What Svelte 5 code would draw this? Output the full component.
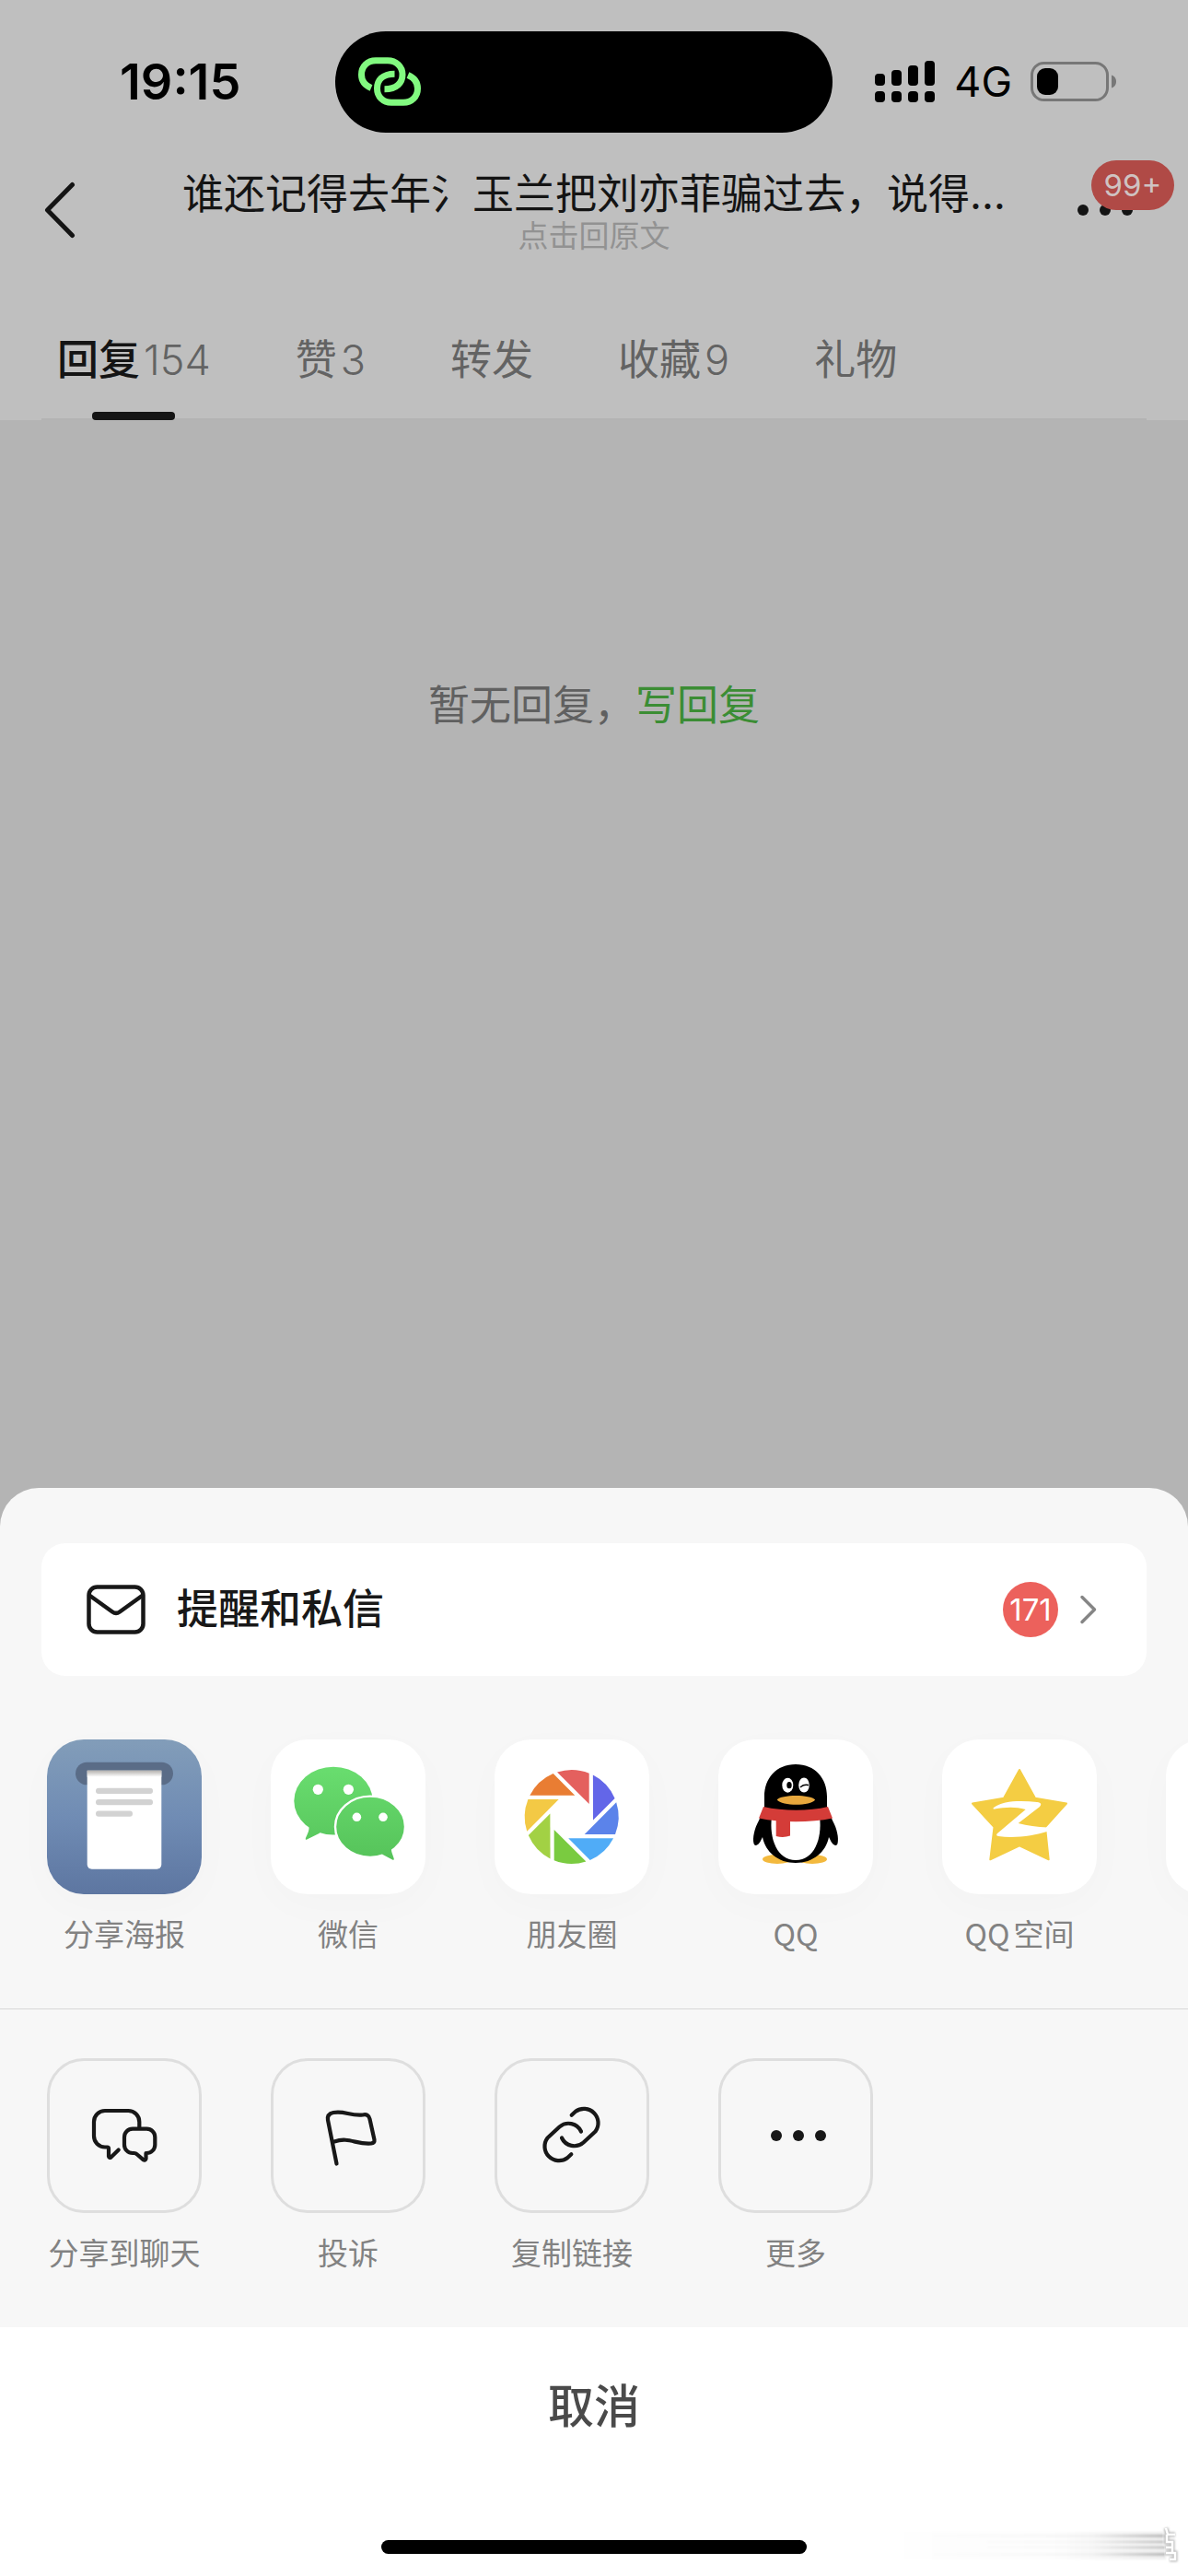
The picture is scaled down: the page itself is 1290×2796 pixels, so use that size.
<script lang="ts">
  type Tab = { name: string; count?: number };
  type Item = { id: string; label: string };

  const tabs: Tab[] = [
    { name: "回复", count: 154 },
    { name: "赞", count: 3 },
    { name: "转发" },
    { name: "收藏", count: 9 },
    { name: "礼物" },
  ];

  const apps: Item[] = [
    { id: "poster", label: "分享海报" },
    { id: "wechat", label: "微信" },
    { id: "moments", label: "朋友圈" },
    { id: "qq", label: "QQ" },
    { id: "qzone", label: "QQ空间" },
  ];

  const actions: Item[] = [
    { id: "chat", label: "分享到聊天" },
    { id: "report", label: "投诉" },
    { id: "link", label: "复制链接" },
    { id: "more", label: "更多" },
  ];

  // shutter blades, clockwise from the top
  const blades = [
    "#e4605e",
    "#6366e8",
    "#5b83ea",
    "#50acf7",
    "#7acb40",
    "#a2d144",
    "#f3c945",
    "#e97d33",
  ];

  let activeTab = $state(0);
</script>

<div class="page">
  <header class="top">
    <div class="status">
      <span class="status__time">19:15</span>
      <div class="status__island">
        <svg width="68" height="54" viewBox="0 0 68 54" fill="none" stroke="#82fa80" stroke-width="7">
          <path d="M14 33.500C7 30.500 3.500 25 3.500 19C3.500 10 10 3.700 19 3.700H32C41 3.700 48 10 48 19C48 27.500 42 34.800 28.500 34.800" />
          <path d="M54 19.500C61 22.500 64.500 28 64.500 34C64.500 43 58 49.300 49 49.300H36C27 49.300 20.500 43 20.500 34C20.500 25.500 26 18.200 39.500 18.200" />
        </svg>
      </div>
      <div class="status__right">
        <svg width="66" height="46" viewBox="0 0 66 46">
          <rect x="0" y="14" width="11" height="13" rx="4" />
          <rect x="18" y="10" width="11" height="17" rx="4" />
          <rect x="36" y="5" width="11" height="22" rx="4" />
          <rect x="54" y="0" width="11" height="27" rx="4" />
          <rect x="0" y="33" width="11" height="12" rx="4" />
          <rect x="18" y="33" width="11" height="12" rx="4" />
          <rect x="36" y="33" width="11" height="12" rx="4" />
          <rect x="54" y="33" width="11" height="12" rx="4" />
        </svg>
        <span class="status__network">4G</span>
        <svg width="93" height="44" viewBox="0 0 93 44">
          <rect x="1.500" y="1.500" width="82" height="40" rx="13" fill="none" stroke="#777" stroke-width="3" />
          <rect x="7" y="7" width="23" height="29" rx="9" />
          <path d="M88 14.500c3 .8 5 3.600 5 7s-2 6.200-5 7z" fill="#777" />
        </svg>
      </div>
    </div>

    <nav class="nav">
      <button type="button" class="nav__button" aria-label="返回">
        <svg width="34" height="62" viewBox="0 0 34 62" fill="none" stroke="#141414" stroke-width="5" stroke-linecap="round" stroke-linejoin="round">
          <path d="M30.500 3.500L3.500 31l27 27.500" />
        </svg>
      </button>
      <div class="nav__center">
        <h1 class="nav__title">谁还记得去年氵玉兰把刘亦菲骗过去，说得…</h1>
        <a class="nav__source" href="#source">点击回原文</a>
      </div>
      <button type="button" class="nav__button" aria-label="菜单">
        <svg width="60" height="12" viewBox="0 0 60 12" fill="#141414">
          <circle cx="6" cy="6" r="6" />
          <circle cx="30" cy="6" r="6" />
          <circle cx="54" cy="6" r="6" />
        </svg>
        <span class="nav__badge">99+</span>
      </button>
    </nav>

    <div class="tabs" role="tablist">
      {#each tabs as tab, i}
        <button
          type="button"
          role="tab"
          class="tabs__item"
          class:tabs__item--active={i === activeTab}
          aria-selected={i === activeTab}
          onclick={() => (activeTab = i)}
        >
          <span class="tabs__name">{tab.name}</span>
          {#if tab.count !== undefined}
            <span class="tabs__count">{tab.count}</span>
          {/if}
        </button>
      {/each}
    </div>
  </header>

  <main class="content">
    <p class="content__empty">暂无回复，<a class="content__write" href="#reply">写回复</a></p>
  </main>

  <section class="sheet">
    <button type="button" class="notice">
      <svg width="64" height="54" viewBox="0 0 64 54" fill="none" stroke="#181818" stroke-width="4.500" stroke-linejoin="round">
        <rect x="2.500" y="2.500" width="59" height="49" rx="9" />
        <path d="M3 11.500L28 29.500q4 2.800 8 0L61 11.500" />
      </svg>
      <span class="notice__text">提醒和私信</span>
      <span class="notice__badge">171</span>
      <svg width="20" height="32" viewBox="0 0 20 32" fill="none" stroke="#858585" stroke-width="3.500" stroke-linecap="round" stroke-linejoin="round">
        <path d="M3 2.500L16.500 16 3 29.500" />
      </svg>
    </button>

    <div class="row row--apps">
      {#each apps as app}
        <button type="button" class="item">
          <span class="tile">
            <svg width="168" height="168" viewBox="0 0 168 168">
              {#if app.id === "poster"}
                <defs>
                  <linearGradient id="poster-bg" x1="0" y1="0" x2="0" y2="1">
                    <stop offset="0" stop-color="#829db9" />
                    <stop offset="0.500" stop-color="#708cb4" />
                    <stop offset="1" stop-color="#5d76a1" />
                  </linearGradient>
                  <linearGradient id="poster-shade" x1="0" y1="0" x2="0" y2="1">
                    <stop offset="0" stop-color="#b3b0ad" />
                    <stop offset="1" stop-color="#fff" />
                  </linearGradient>
                </defs>
                <rect width="168" height="168" fill="url(#poster-bg)" />
                <rect x="31" y="24.700" width="106" height="24.600" rx="12.300" fill="#5a6c87" />
                <path d="M43.700 33.700h80.600v102a5 5 0 0 1-5 5H48.700a5 5 0 0 1-5-5z" fill="#fff" />
                <rect x="43.700" y="33.700" width="80.600" height="7" fill="url(#poster-shade)" />
                <rect x="53" y="52.700" width="62" height="6.300" rx="3" fill="#d2d2d2" />
                <rect x="53" y="65" width="62" height="6.300" rx="3" fill="#d2d2d2" />
                <rect x="53" y="77.400" width="40" height="6.300" rx="3" fill="#d2d2d2" />
              {:else if app.id === "wechat"}
                <defs>
                  <linearGradient id="wechat-green" gradientUnits="userSpaceOnUse" x1="0" y1="30" x2="0" y2="131">
                    <stop offset="0" stop-color="#69dd6f" />
                    <stop offset="1" stop-color="#56c35a" />
                  </linearGradient>
                </defs>
                <g fill="url(#wechat-green)">
                  <ellipse cx="68" cy="66.700" rx="42.700" ry="36.900" />
                  <path d="M41.500 95.500c.5 4-3 9.500-3.700 12.200-.2 1 .8 1.300 1.500.8L52.500 102l6-6-14-6z" />
                  <ellipse cx="108" cy="94.800" rx="38" ry="33.200" stroke="#fff" stroke-width="2.400" />
                  <path d="M131 118.500c-.5 3.500 2.300 8 2.800 11.300.1.900-.6 1.300-1.300.9L121.700 125l-5-5 10-4z" />
                </g>
                <g fill="#fff">
                  <circle cx="51.300" cy="54.300" r="5.600" />
                  <circle cx="84.400" cy="54.300" r="5.600" />
                  <circle cx="93.400" cy="84.300" r="4.800" />
                  <circle cx="122" cy="84.300" r="4.800" />
                </g>
              {:else if app.id === "moments"}
                <g transform="translate(83.700 84)">
                  {#each blades as color, i}
                    <path d="M19 -47.300V-14L-15.700 -48.500A51 51 0 0 1 19 -47.300Z" fill={color} transform="rotate({i * 45})" />
                  {/each}
                </g>
              {:else if app.id === "qq"}
                <g fill="#f3b93e">
                  <ellipse cx="64" cy="130" rx="16" ry="5" />
                  <ellipse cx="102" cy="130" rx="16" ry="5" />
                </g>
                <path d="M84 27C63 27 50 42 50 62v12L44 88c-5 9-7 19-5.500 25 .8 3 4 2 5.500 0 2-2.500 3-5 4-7 3 16 17 28 36 28s33-12 36-28c1 2 2 4.500 4 7 1.500 2 4.700 3 5.500 0 1.500-6-.5-16-5.500-25l-6-14V62C118 42 105 27 84 27Z" fill="#000" />
                <path d="M58 84h52c3 24-6 47-26 47S55 108 58 84Z" fill="#fff" />
                <path d="M49 73c22 5 49 5 70 0l5 12.500c-24 5-56 5-80 0Z" fill="#d43c38" />
                <path d="M62.700 84H78v20.500q-7 2.500-15.300.5Z" fill="#d43c38" />
                <ellipse cx="75.300" cy="49.700" rx="6" ry="8" fill="#fff" />
                <ellipse cx="93" cy="49.500" rx="5.800" ry="8" fill="#fff" />
                <ellipse cx="77" cy="49.700" rx="2.700" ry="3.600" />
                <path d="M89.500 51.500q3.500-3 8-2" fill="none" stroke="#000" stroke-width="1.500" stroke-linecap="round" />
                <path d="M63.700 65.500c4-6 37-6 41.500 0-5 7-36 7-41.500 0Z" fill="#e8a83d" />
              {:else}
                <path d="M84 33l17 30.800 34 5.800L112 95l3.700 35.300L84 115.300l-31.700 15L56.500 95 33 69.600l34-5.800z" fill="#f4cd43" stroke="#f4cd43" stroke-width="2" stroke-linejoin="round" />
                <path d="M56 74C66 66 86 66 103 68c5 .8 5 2.500 3 5L82.700 91c10 2.500 20 4 32 4.500v4.200c-15 4.500-35 8-53.700 5.300-2-.5-2.500-1.500-1-3L90.700 76C79 72.500 68 73.500 57 75.500c-1.500.2-2-.6-1-1.500Z" fill="#fff" />
              {/if}
            </svg>
          </span>
          <span class="item__label">{app.label}</span>
        </button>
      {/each}
      <div class="tile"></div>
    </div>

    <div class="row">
      {#each actions as action}
        <button type="button" class="item">
          <span class="tile tile--outlined">
            <svg width="168" height="168" viewBox="0 0 168 168" fill="none" stroke="#181818" stroke-width="4.200" stroke-linecap="round" stroke-linejoin="round">
              {#if action.id === "chat"}
                <path d="M100.300 76v-7a12 12 0 0 0-12-12H63a12 12 0 0 0-12 12v15.500a12 12 0 0 0 12 12h2.500q1.500 0 1.500 1.500v8.500q.5 2 2.500 1l8.200-8" />
                <path d="M93 76.700h15.300a9 9 0 0 1 9 9V94a9 9 0 0 1-9 9h-.8v6q-.8 2.500-3 1.200L98 104.500q-1.500-1.500-3.500-1.500H93a9 9 0 0 1-9-9v-8.300a9 9 0 0 1 9-9z" />
              {:else if action.id === "report"}
                <path d="M71.500 114.500L62 67q-1-6.500 6-8c12-2.500 18 4 32 2.500q6-1.500 7.500 4.500l5 22.500q.5 3.500-3.500 4c-16 1.500-24-7.500-40-2" />
              {:else if action.id === "link"}
                <path d="M83.700 61.700L88 57.700A15.500 15.500 0 0 1 109.500 79.500L96.500 91.500A15 15 0 0 1 73 86.500" />
                <path d="M83.700 61.700L88 57.700A15.500 15.500 0 0 1 109.500 79.500L96.500 91.500A15 15 0 0 1 73 86.500" transform="rotate(180 83.500 83)" />
              {:else}
                <g fill="#181818" stroke="none">
                  <circle cx="63" cy="84" r="6" />
                  <circle cx="87" cy="84" r="6" />
                  <circle cx="111" cy="84" r="6" />
                </g>
              {/if}
            </svg>
          </span>
          <span class="item__label">{action.label}</span>
        </button>
      {/each}
    </div>

    <footer class="footer">
      <button type="button" class="footer__cancel">取消</button>
      <div class="footer__home"></div>
      <svg class="footer__smear" width="300" height="52" viewBox="0 0 300 52">
        <defs>
          <linearGradient id="smear-dark" gradientUnits="userSpaceOnUse" x1="20" y1="0" x2="284" y2="0">
            <stop offset="0" stop-color="#000" stop-opacity="0" />
            <stop offset="0.700" stop-color="#000" stop-opacity="0.030" />
            <stop offset="1" stop-color="#000" stop-opacity="0.220" />
          </linearGradient>
          <linearGradient id="smear-light">
            <stop offset="0" stop-color="#000" stop-opacity="0.005" />
            <stop offset="0.600" stop-color="#000" stop-opacity="0.010" />
            <stop offset="1" stop-color="#000" stop-opacity="0.070" />
          </linearGradient>
          <filter id="smear-soft" x="-20%" y="-20%" width="140%" height="140%">
            <feGaussianBlur stdDeviation="1.200" />
          </filter>
        </defs>
        <g filter="url(#smear-soft)">
          <rect x="0" y="8" width="284" height="30" fill="url(#smear-light)" />
          <rect x="20" y="11" width="264" height="3" fill="url(#smear-dark)" />
          <rect x="90" y="18" width="194" height="2" fill="url(#smear-dark)" />
          <rect x="90" y="24" width="194" height="2" fill="url(#smear-dark)" />
          <rect x="20" y="31" width="264" height="3" fill="url(#smear-dark)" />
          <path d="M284 4l2 7h8M285 11v8h6v11M284 25h7M284 31h10v7h-6" fill="none" stroke="#bbb" stroke-width="5" />
        </g>
        <path d="M284 4l2 7h8M285 11v8h6v11M284 25h7M284 31h10v7h-6" fill="none" stroke="#fff" stroke-width="2.500" />
      </svg>
    </footer>
  </section>
</div>

<style>
  :global(body) {
    margin: 0;
  }

  .page {
    display: flex;
    flex-direction: column;
    min-height: 100vh;
    overflow: hidden;
    background: #b4b4b4;
    color: #141414;
    font-family: Inter, "Noto Sans CJK SC", sans-serif;
    font-size: 45px;
    line-height: 60px;
  }

  button {
    border: 0;
    padding: 0;
    background: none;
    color: inherit;
    font: inherit;
    cursor: pointer;
  }

  a {
    text-decoration: none;
  }

  svg {
    display: block;
    flex-shrink: 0;
  }

  .top {
    background: #bfbfbf;
  }

  .status {
    display: flex;
    align-items: center;
    height: 178px;
    padding: 0 78px 0 130px;
    color: #000;
  }

  .status__time {
    flex: 0 0 234px;
    font-size: 54px;
    font-weight: 600;
  }

  .status__island {
    display: flex;
    align-items: center;
    flex: 0 0 540px;
    box-sizing: border-box;
    height: 110px;
    padding-left: 25px;
    border-radius: 55px;
    background: #000;
  }

  .status__right {
    display: flex;
    align-items: center;
    gap: 20px;
    margin-left: auto;
  }

  .nav {
    display: flex;
    align-items: flex-start;
    justify-content: space-between;
    padding: 8px 48px 0;
  }

  .nav__button {
    position: relative;
    display: flex;
    align-items: center;
    width: 72px;
    height: 84px;
  }

  .nav__center {
    display: flex;
    flex-direction: column;
    align-items: center;
    min-width: 0;
  }

  .nav__title {
    margin: 0;
    font-size: 45px;
    font-weight: 400;
    line-height: 50px;
    white-space: nowrap;
  }

  .nav__source {
    color: #929292;
    font-size: 33px;
    line-height: 40px;
  }

  .nav__badge {
    position: absolute;
    top: -12px;
    left: 15px;
    width: 90px;
    border-radius: 27px;
    background: #b04a46;
    color: #cfc3c2;
    font-size: 33px;
    line-height: 54px;
  }

  .tabs {
    display: flex;
    gap: 92px;
    margin: 48px 45px 0;
    padding-left: 17px;
    border-bottom: 2px solid #b3b3b3;
  }

  .tabs__item {
    position: relative;
    display: flex;
    align-items: center;
    gap: 4px;
    box-sizing: border-box;
    height: 130px;
    padding-top: 4px;
    color: #636363;
  }

  .tabs__count {
    font-weight: 300;
  }

  .tabs__item--active .tabs__name {
    color: #141414;
    font-weight: 500;
  }

  .tabs__item--active::after {
    content: "";
    position: absolute;
    bottom: -2px;
    left: 50%;
    width: 90px;
    height: 9px;
    margin-left: -45px;
    border-radius: 4px;
    background: #141414;
  }

  .content {
    flex: 1;
    padding-top: 280px;
  }

  .content__empty {
    margin: 0;
    color: #606060;
    text-align: center;
  }

  .content__write {
    color: #3b8d34;
  }

  .sheet {
    border-radius: 42px 42px 0 0;
    padding-top: 60px;
    background: #f7f7f7;
  }

  .notice {
    display: flex;
    align-items: center;
    box-sizing: border-box;
    width: calc(100% - 90px);
    height: 144px;
    margin: 0 45px;
    padding: 0 53px 0 49px;
    border-radius: 26px;
    background: #fff;
    color: #181818;
  }

  .notice__text {
    flex: 1;
    margin-left: 34px;
    font-weight: 500;
    text-align: left;
  }

  .notice__badge {
    width: 60px;
    margin-right: 23px;
    border-radius: 30px;
    background: #ec615c;
    color: #fff;
    font-size: 33px;
    line-height: 60px;
    text-align: center;
  }

  .row {
    display: flex;
    gap: 75px;
    padding: 53px 0 62px 51px;
    overflow: hidden;
  }

  .row--apps {
    padding-top: 69px;
    border-bottom: 1px solid #d8d8d8;
  }

  .item {
    display: flex;
    flex: 0 0 168px;
    flex-direction: column;
    align-items: center;
    gap: 22px;
  }

  .item__label {
    color: #828282;
    font-family: "Noto Sans CJK SC", sans-serif;
    font-size: 33px;
    line-height: 40px;
    white-space: nowrap;
    text-autospace: normal;
  }

  .tile {
    flex: 0 0 168px;
    width: 168px;
    height: 168px;
    border-radius: 40px;
    overflow: hidden;
    background: #fff;
    box-shadow: 0 12px 48px rgba(0, 0, 0, 0.02);
  }

  .tile--outlined {
    box-sizing: border-box;
    border: 3px solid #dedede;
    background: #f7f7f7;
    box-shadow: none;
  }

  .tile--outlined svg {
    margin: -3px;
  }

  .footer {
    position: relative;
    padding-bottom: 24px;
    background: #fff;
  }

  .footer__cancel {
    display: block;
    width: 100%;
    height: 171px;
    color: #4a4a4a;
    font-size: 50px;
    font-weight: 500;
  }

  .footer__home {
    width: 462px;
    height: 15px;
    margin: 60px auto 0;
    border-radius: 8px;
    background: #000;
  }

  .footer__smear {
    position: absolute;
    right: 8px;
    bottom: 4px;
  }
</style>
